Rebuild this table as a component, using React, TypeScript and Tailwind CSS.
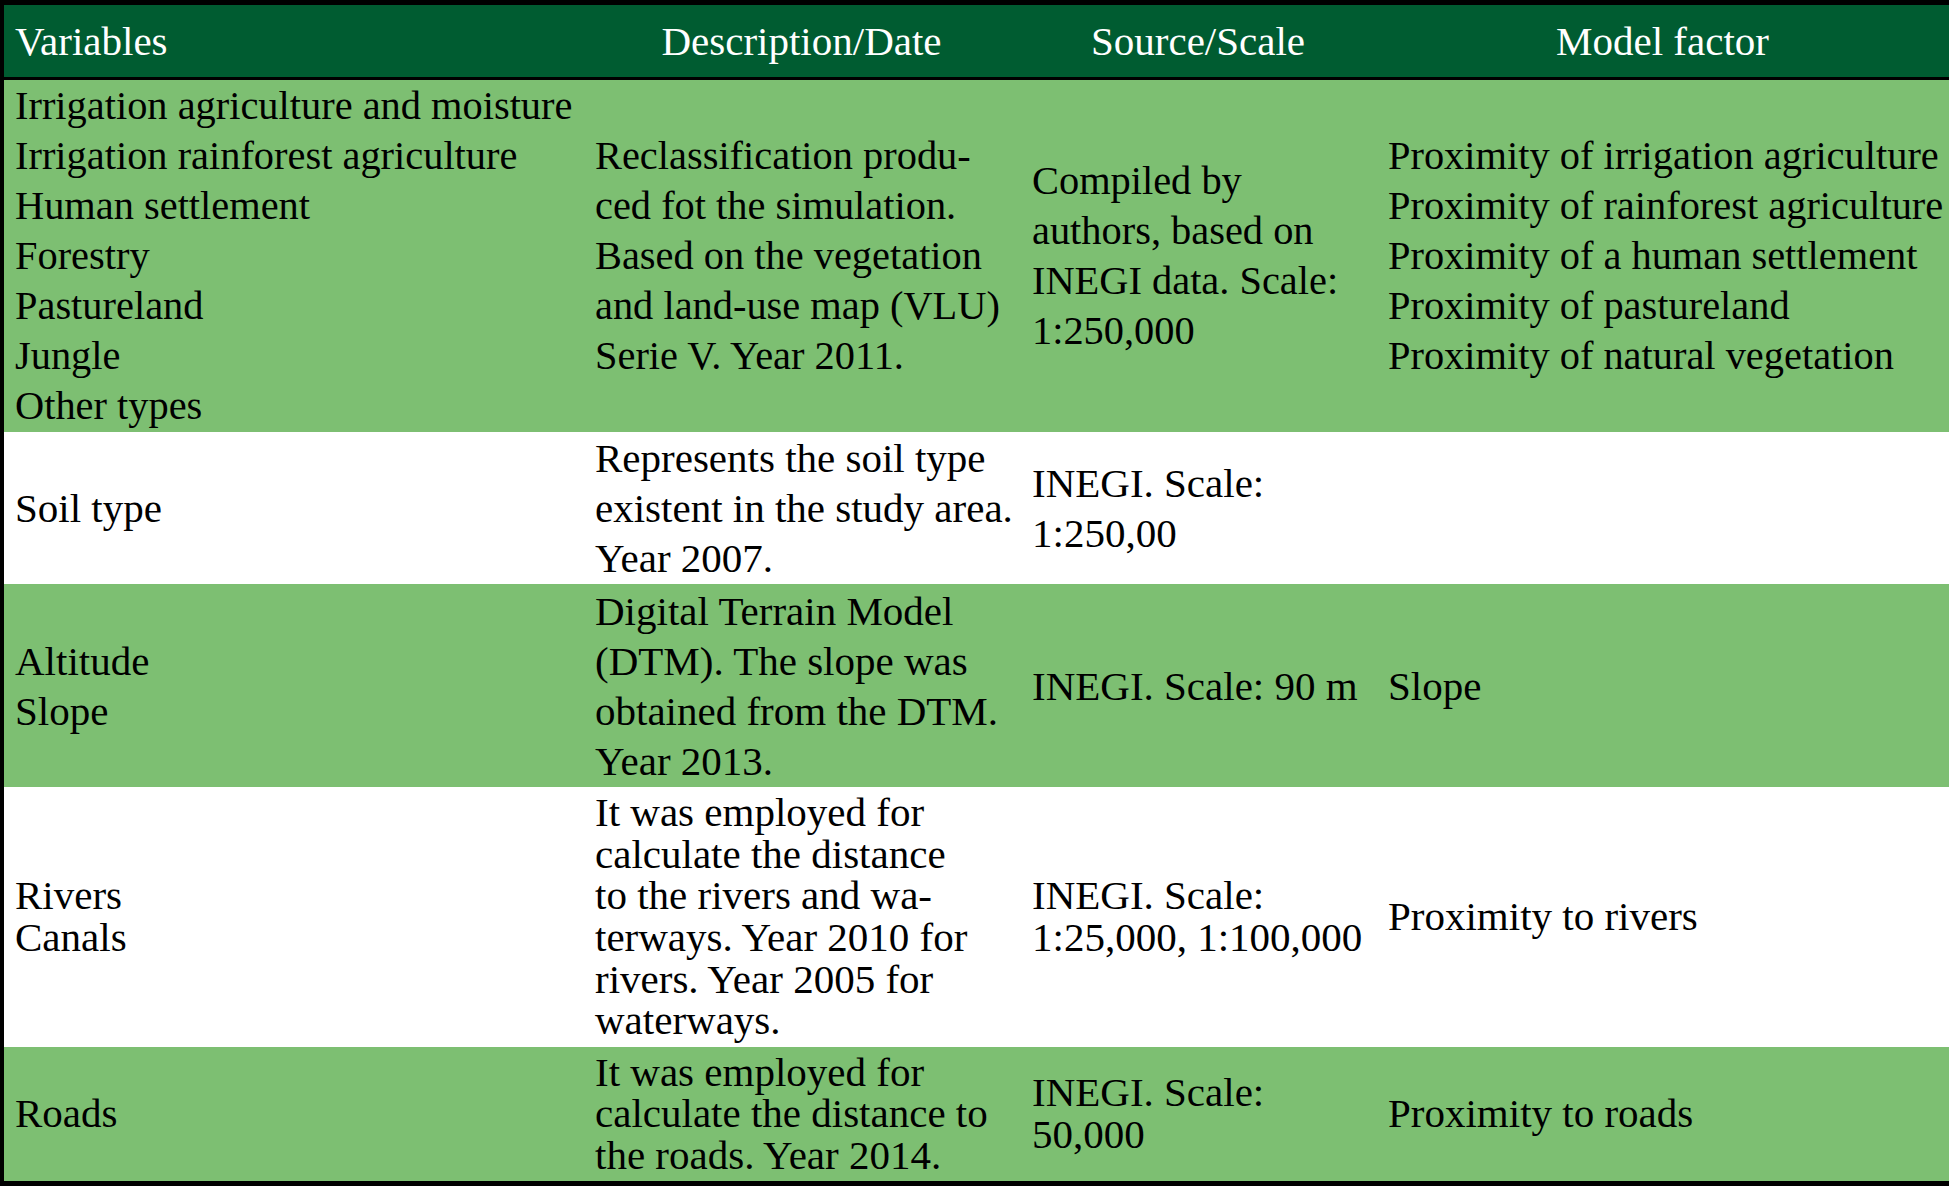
const rows = [
  {
    bg: 'bg-[#7dbf72]',
    h: 'h-[352px]',
    lh: 'leading-[50px] text-[40.4px]',
    cells: [
      [
        'Irrigation agriculture and moisture',
        'Irrigation rainforest agriculture',
        'Human settlement',
        'Forestry',
        'Pastureland',
        'Jungle',
        'Other types',
      ],
      [
        'Reclassification produ-',
        'ced fot the simulation.',
        'Based on the vegetation',
        'and land-use map (VLU)',
        'Serie V. Year 2011.',
      ],
      ['Compiled by', 'authors, based on', 'INEGI data. Scale:', '1:250,000'],
      [
        'Proximity of irrigation agriculture',
        'Proximity of rainforest agriculture',
        'Proximity of a human settlement',
        'Proximity of pastureland',
        'Proximity of natural vegetation',
      ],
    ],
  },
  {
    bg: 'bg-white',
    h: 'h-[152px]',
    lh: 'leading-[50px]',
    cells: [
      ['Soil type'],
      ['Represents the soil type', 'existent in the study area.', 'Year 2007.'],
      ['INEGI. Scale:', '1:250,00'],
      [],
    ],
  },
  {
    bg: 'bg-[#7dbf72]',
    h: 'h-[203px]',
    lh: 'leading-[50px]',
    cells: [
      ['Altitude', 'Slope'],
      ['Digital Terrain Model', '(DTM). The slope was', 'obtained from the DTM.', 'Year 2013.'],
      ['INEGI. Scale: 90 m'],
      ['Slope'],
    ],
  },
  {
    bg: 'bg-white',
    h: 'h-[260px]',
    lh: 'leading-[41.6px]',
    cells: [
      ['Rivers', 'Canals'],
      [
        'It was employed for',
        'calculate the distance',
        'to the rivers and wa-',
        'terways. Year 2010 for',
        'rivers. Year 2005 for',
        'waterways.',
      ],
      ['INEGI. Scale:', '1:25,000, 1:100,000'],
      ['Proximity to rivers'],
    ],
  },
  {
    bg: 'bg-[#7dbf72]',
    h: 'h-[134px]',
    lh: 'leading-[41.6px]',
    cells: [
      ['Roads'],
      ['It was employed for', 'calculate the distance to', 'the roads. Year 2014.'],
      ['INEGI. Scale:', '50,000'],
      ['Proximity to roads'],
    ],
  },
]

const pads = ['pl-[11px]', 'pl-[12px]', 'pl-[12px]', 'pl-[12px]']

export default function App() {
  return (
    <div
      className="w-[1949px] h-[1186px] bg-white overflow-hidden text-[41px] text-black"
      style={{ fontFamily: '"Liberation Serif", "Times New Roman", serif' }}
    >
      <div className="border-t-[5px] border-b-[5px] border-l-4 border-black">
        <div className="grid grid-cols-[579px_437px_356px_573px] h-[72px] items-center bg-[#005c31] text-white leading-[50px] border-b-[3px] border-black box-content">
          <div className="pl-[11px]">Variables</div>
          <div className="text-center">Description/Date</div>
          <div className="text-center">Source/Scale</div>
          <div className="text-center">Model factor</div>
        </div>
        {rows.map((r, i) => (
          <div key={i} className={`grid grid-cols-[579px_437px_356px_573px] items-center ${r.bg} ${r.h} ${r.lh}`}>
            {r.cells.map((lines, j) => (
              <div key={j} className={`${pads[j]} flex flex-col whitespace-nowrap`}>
                {lines.map((t, k) => (
                  <span key={k}>{t}</span>
                ))}
              </div>
            ))}
          </div>
        ))}
      </div>
    </div>
  )
}
